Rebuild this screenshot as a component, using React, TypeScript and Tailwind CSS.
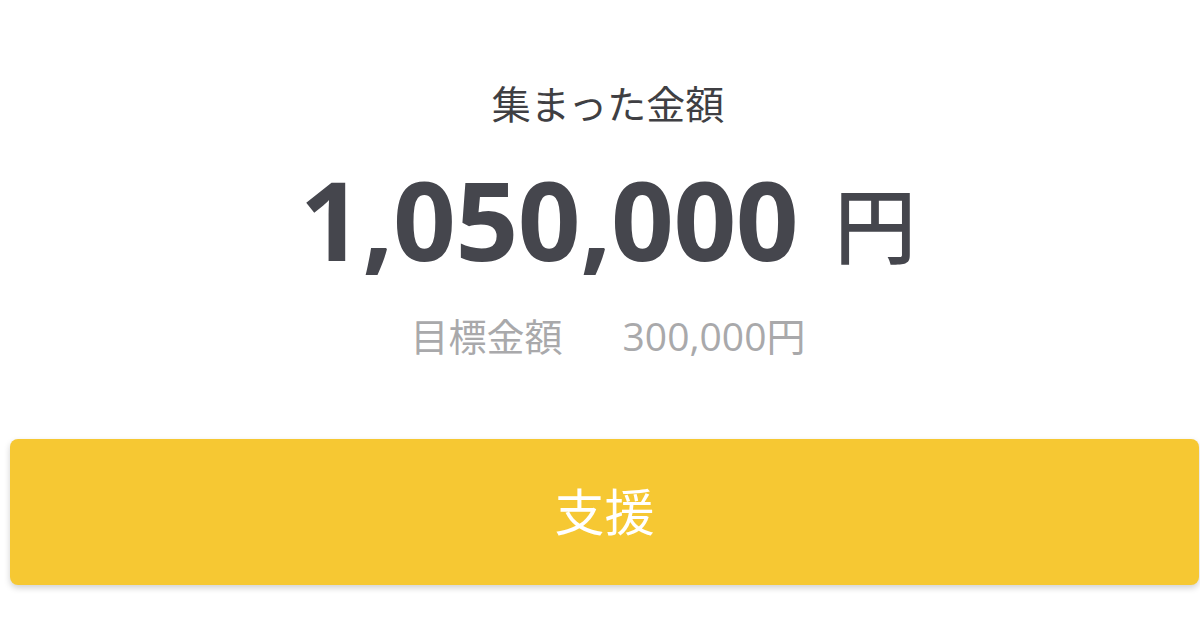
const font = "font-['Open_Sans','Noto_Sans_CJK_JP',sans-serif]";

export default function App() {
  return (
    <div className={`w-[1200px] h-[630px] overflow-hidden bg-white ${font}`}>
      <div className="flex flex-col items-center pl-[16px] pt-[77px]">
        <p className="text-[39px] leading-[54px] text-[#3f3f43]">集まった金額</p>
        <div className="mt-[32px] flex items-baseline text-[#45464d]">
          <span className="text-[110px] font-bold leading-[110px] tracking-[-0.5px]">1,050,000</span>
          <span className="ml-[36px] relative -top-[4px] text-[82px] font-medium leading-[110px]">円</span>
        </div>
        <div className="mt-[27px] flex items-baseline text-[38px] leading-[50px] text-[#a9a9ab]">
          <span>目標金額</span>
          <span className="ml-[60px] text-[39px]">300,000円</span>
        </div>
      </div>
      <div className="mt-[78px] ml-[10px] mr-[1px]">
        <button className="flex h-[146px] w-full items-center justify-center rounded-[8px] bg-[#f6c833] text-[50px] text-white shadow-[0_3px_6px_rgba(0,0,0,0.18)]">
          支援
        </button>
      </div>
    </div>
  );
}
